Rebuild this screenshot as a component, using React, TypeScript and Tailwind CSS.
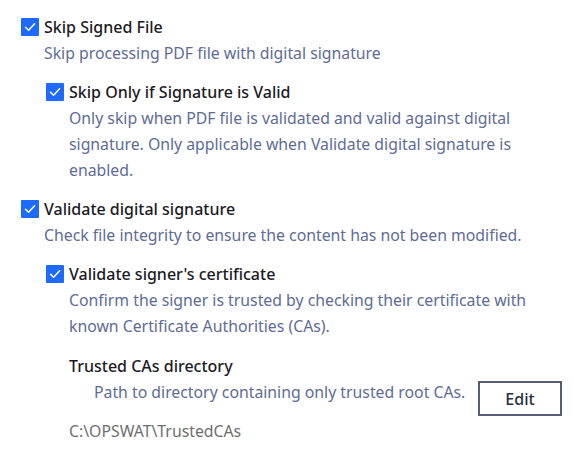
import type { ReactNode } from 'react';

function CheckBox() {
  return (
    <span className="flex h-[18px] w-[18px] shrink-0 items-center justify-center rounded-[1px] bg-[#1d6afc]">
      <svg width="12" height="10" viewBox="0 0 12 10" fill="none">
        <path d="M1.5 5.2 4.6 8.2 10.6 1.8" stroke="white" strokeWidth="1.5" strokeLinecap="round" strokeLinejoin="round" />
      </svg>
    </span>
  );
}

type OptionProps = {
  title: string;
  description: string;
  className?: string;
  children?: ReactNode;
};

function Option({ title, description, className, children }: OptionProps) {
  return (
    <div className={className}>
      <label className="flex items-center gap-[5px]">
        <CheckBox />
        <span className="text-[16px] font-medium leading-[26px] text-[#1b1b1f]">{title}</span>
      </label>
      <div className="pl-[23px]">
        <p className="text-[15.8px] leading-[26px] text-[#5d6c98]">{description}</p>
        {children}
      </div>
    </div>
  );
}

export default function App() {
  return (
    <div className="h-[454px] w-[574px] bg-white pl-[21px] pr-3 pt-[14px] font-['Noto_Sans',sans-serif]">
      <Option title="Skip Signed File" description="Skip processing PDF file with digital signature">
        <Option
          className="mt-[13px] ml-[2px]"
          title="Skip Only if Signature is Valid"
          description="Only skip when PDF file is validated and valid against digital signature. Only applicable when Validate digital signature is enabled."
        />
      </Option>
      <Option
        className="mt-[13px]"
        title="Validate digital signature"
        description="Check file integrity to ensure the content has not been modified."
      >
        <Option
          className="mt-[13px] ml-[2px]"
          title="Validate signer's certificate"
          description="Confirm the signer is trusted by checking their certificate with known Certificate Authorities (CAs)."
        />
        <div className="mt-[14px] pl-[25px]">
          <h3 className="text-[16px] font-medium leading-[26px] text-[#1b1b1f]">Trusted CAs directory</h3>
          <div className="flex items-start justify-between">
            <p className="pl-[25px] text-[15.8px] leading-[26px] text-[#5d6c98]">
              Path to directory containing only trusted root CAs.
            </p>
            <button className="mt-[2px] h-[35px] w-[84px] border-2 border-[#545d7a] text-[16px] font-medium text-[#2a2e3d]">
              Edit
            </button>
          </div>
          <p className="mt-[2px] text-[15.8px] leading-[26px] text-[#6e6e70]">C:\OPSWAT\TrustedCAs</p>
        </div>
      </Option>
    </div>
  );
}
